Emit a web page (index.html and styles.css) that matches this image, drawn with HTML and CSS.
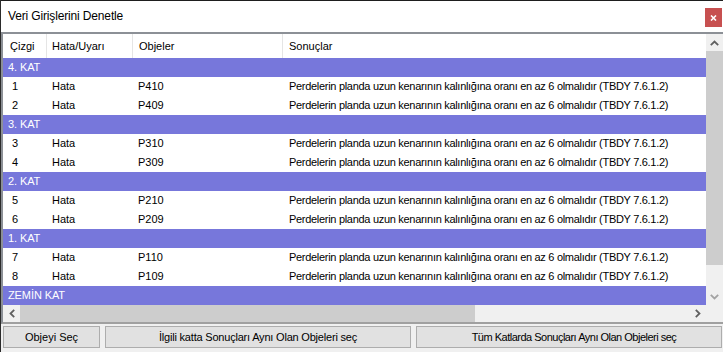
FILE: index.html
```html
<!DOCTYPE html>
<html lang="tr">
<head>
<meta charset="utf-8">
<title>Veri Girişlerini Denetle</title>
<link rel="stylesheet" href="styles.css">
</head>
<body>
<div class="window">
  <div class="topline"></div>
  <div class="titlebar">
    <span class="title">Veri Girişlerini Denetle</span>
    <button class="close" aria-label="Kapat">
      <svg width="7" height="6" viewBox="0 0 7 6"><path d="M1 0.5 L6 5.5 M6 0.5 L1 5.5" stroke="#fff" stroke-width="1.6" fill="none"/></svg>
    </button>
  </div>
  <div class="list">
    <div class="content">
      <div class="row head">
        <div class="c1">Çizgi</div>
        <div class="c2">Hata/Uyarı</div>
        <div class="c3">Objeler</div>
        <div class="c4">Sonuçlar</div>
      </div>
      <div class="group">4. KAT</div>
      <div class="row"><div class="c1">1</div><div class="c2">Hata</div><div class="c3">P410</div><div class="c4">Perdelerin planda uzun kenarının kalınlığına oranı en az 6 olmalıdır (TBDY 7.6.1.2)</div></div>
      <div class="row"><div class="c1">2</div><div class="c2">Hata</div><div class="c3">P409</div><div class="c4">Perdelerin planda uzun kenarının kalınlığına oranı en az 6 olmalıdır (TBDY 7.6.1.2)</div></div>
      <div class="group">3. KAT</div>
      <div class="row"><div class="c1">3</div><div class="c2">Hata</div><div class="c3">P310</div><div class="c4">Perdelerin planda uzun kenarının kalınlığına oranı en az 6 olmalıdır (TBDY 7.6.1.2)</div></div>
      <div class="row"><div class="c1">4</div><div class="c2">Hata</div><div class="c3">P309</div><div class="c4">Perdelerin planda uzun kenarının kalınlığına oranı en az 6 olmalıdır (TBDY 7.6.1.2)</div></div>
      <div class="group">2. KAT</div>
      <div class="row"><div class="c1">5</div><div class="c2">Hata</div><div class="c3">P210</div><div class="c4">Perdelerin planda uzun kenarının kalınlığına oranı en az 6 olmalıdır (TBDY 7.6.1.2)</div></div>
      <div class="row"><div class="c1">6</div><div class="c2">Hata</div><div class="c3">P209</div><div class="c4">Perdelerin planda uzun kenarının kalınlığına oranı en az 6 olmalıdır (TBDY 7.6.1.2)</div></div>
      <div class="group">1. KAT</div>
      <div class="row"><div class="c1">7</div><div class="c2">Hata</div><div class="c3">P110</div><div class="c4">Perdelerin planda uzun kenarının kalınlığına oranı en az 6 olmalıdır (TBDY 7.6.1.2)</div></div>
      <div class="row"><div class="c1">8</div><div class="c2">Hata</div><div class="c3">P109</div><div class="c4">Perdelerin planda uzun kenarının kalınlığına oranı en az 6 olmalıdır (TBDY 7.6.1.2)</div></div>
      <div class="group">ZEMİN KAT</div>
    </div>
    <div class="vscroll">
      <div class="arrow up"><svg width="9" height="6" viewBox="0 0 9 6"><path d="M0.8 5.2 L4.5 1.5 L8.2 5.2" stroke="#606060" stroke-width="1.8" fill="none"/></svg></div>
      <div class="vthumb-area"><div class="vthumb"></div></div>
      <div class="arrow down"><svg width="9" height="6" viewBox="0 0 9 6"><path d="M0.8 0.8 L4.5 4.5 L8.2 0.8" stroke="#a3a3a3" stroke-width="1.8" fill="none"/></svg></div>
    </div>
    <div class="hscroll">
      <div class="arrow left"><svg width="6" height="9" viewBox="0 0 6 9"><path d="M5.2 0.8 L1.5 4.5 L5.2 8.2" stroke="#606060" stroke-width="1.8" fill="none"/></svg></div>
      <div class="hthumb-area"><div class="hthumb"></div></div>
      <div class="arrow right"><svg width="6" height="9" viewBox="0 0 6 9"><path d="M0.8 0.8 L4.5 4.5 L0.8 8.2" stroke="#606060" stroke-width="1.8" fill="none"/></svg></div>
    </div>
    <div class="corner"></div>
  </div>
  <div class="buttons">
    <button class="btn b1">Objeyi Seç</button>
    <button class="btn b2">İlgili katta Sonuçları Aynı Olan Objeleri seç</button>
    <button class="btn b3">Tüm Katlarda Sonuçları Aynı Olan Objeleri seç</button>
  </div>
</div>
</body>
</html>
```

FILE: styles.css
```css
* { box-sizing: border-box; }
html, body { margin: 0; padding: 0; }
body {
  width: 723px;
  height: 352px;
  overflow: hidden;
  background: #f0f0f0;
  font-family: "Liberation Sans", Arial, sans-serif;
  font-size: 11px;
  color: #000;
}
.window {
  width: 723px;
  height: 352px;
  border-left: 1px solid #2b2b2b;
}
.topline {
  height: 1px;
  background: #1e1e1e;
}
.titlebar {
  height: 31px;
  background: #fff;
  display: flex;
  align-items: flex-start;
  justify-content: space-between;
}
.title {
  padding: 8px 0 0 7px;
  line-height: 14px;
  font-size: 12px;
  letter-spacing: -0.15px;
}
.close {
  width: 17px;
  height: 19px;
  margin: 7px 1px 0 0;
  padding: 0;
  border: 0;
  background: #c75050;
  display: flex;
  align-items: center;
  justify-content: center;
}
.list {
  display: grid;
  grid-template-columns: 1fr 17px;
  grid-template-rows: 271px 17px;
  height: 292px;
  border-top: 2px solid #8c9096;
  border-left: 2px solid #8c9096;
  border-bottom: 2px solid #a0a0a0;
  background: #fff;
}
.content {
  background: #fff;
  overflow: hidden;
}
.row {
  display: flex;
  height: 19px;
  line-height: 19px;
  white-space: nowrap;
}
.row > div { flex: none; }
.c1 { width: 44px; padding-left: 9px; }
.c2 { width: 86px; padding-left: 5px; }
.c3 { width: 150px; padding-left: 5px; }
.c4 { padding-left: 6px; letter-spacing: -0.3px; }
.row.head {
  height: 24px;
  line-height: 25px;
}
.row.head > div { border-right: 1px solid #e5e5e5; }
.row.head .c1 { padding-left: 7px; }
.row.head .c3 { padding-left: 6px; }
.row.head .c4 { border-right: 0; letter-spacing: 0; }
.group {
  height: 19px;
  line-height: 19px;
  background: #7777db;
  color: #fff;
  padding-left: 5px;
  letter-spacing: -0.1px;
}
.vscroll {
  background: #f0f0f0;
  display: flex;
  flex-direction: column;
}
.arrow {
  display: flex;
  align-items: center;
  justify-content: center;
  flex: none;
}
.arrow.up, .arrow.down { height: 17px; }
.vthumb-area { flex: 1; padding: 0 0 23px 0; }
.vthumb { height: 214px; background: #cdcdcd; }
.hscroll {
  background: #f0f0f0;
  display: flex;
}
.arrow.left, .arrow.right { width: 17px; }
.arrow.left { padding-left: 1px; }
.hthumb-area { flex: 1; }
.hthumb { width: 455px; height: 100%; background: #cdcdcd; }
.corner { background: #f0f0f0; }
.buttons {
  display: flex;
  padding: 2px 0 0 2px;
  gap: 5px;
}
.btn {
  height: 22px;
  padding: 0;
  background: #e1e1e1;
  border: 1px solid #adadad;
  font-family: inherit;
  font-size: 11px;
  color: #000;
}
.b1 { width: 97px; }
.b2 { width: 306px; letter-spacing: -0.2px; }
.b3 { width: 306px; letter-spacing: -0.5px; padding-left: 10px; }
```
